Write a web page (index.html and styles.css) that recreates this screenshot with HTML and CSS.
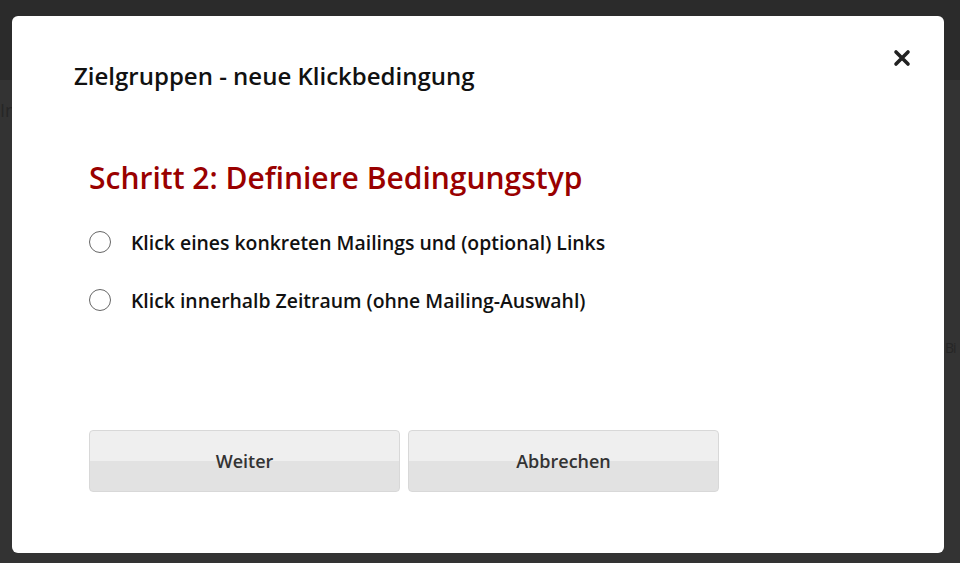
FILE: index.html
```html
<!DOCTYPE html>
<html lang="de">
<head>
<meta charset="utf-8">
<link rel="stylesheet" href="styles.css">
</head>
<body>
<div class="backdrop">
  <div class="bg-band top"></div>
  <div class="bg-text left">Inhn</div>
  <div class="bg-text right">Bi</div>
  <div class="modal">
    <div class="modal-head">
      <h1 class="title">Zielgruppen - neue Klickbedingung</h1>
      <button class="close" aria-label="Schließen">
        <svg width="18" height="18" viewBox="0 0 18 18"><path d="M3 3 L15 15 M15 3 L3 15" stroke="#222" stroke-width="3.6" stroke-linecap="round"/></svg>
      </button>
    </div>
    <div class="modal-body">
      <h2 class="step">Schritt 2: Definiere Bedingungstyp</h2>
      <label class="option"><span class="radio"></span><span>Klick eines konkreten Mailings und (optional) Links</span></label>
      <label class="option"><span class="radio"></span><span>Klick innerhalb Zeitraum (ohne Mailing-Auswahl)</span></label>
      <div class="actions">
        <button class="btn">Weiter</button>
        <button class="btn">Abbrechen</button>
      </div>
    </div>
  </div>
</div>
</body>
</html>
```

FILE: styles.css
```css
* { box-sizing: border-box; }
html, body { margin: 0; padding: 0; }
body {
  width: 960px;
  height: 563px;
  overflow: hidden;
  background: #333333;
  font-family: "Open Sans", "Noto Sans", sans-serif;
}
.backdrop {
  position: relative;
  width: 960px;
  height: 563px;
  padding: 16px 16px 10px 12px;
}
.bg-band.top {
  position: absolute;
  left: 0; top: 0; right: 0;
  height: 80px;
  background: #2b2b2b;
}
.bg-text {
  position: absolute;
  color: #262626;
  font-size: 18px;
}
.bg-text.left { left: 0; top: 98px; }
.bg-text.right { left: 945px; top: 338px; font-size: 14px; letter-spacing: -1px; }
.modal {
  position: relative;
  width: 932px;
  height: 537px;
  background: #fff;
  border-radius: 6px;
  padding: 0 0 0 62px;
}
.modal-head {
  display: flex;
  justify-content: space-between;
  align-items: flex-start;
  padding-top: 44px;
  padding-right: 32px;
}
.title {
  margin: 0;
  font-size: 24px;
  font-weight: 600;
  color: #111;
  line-height: 32px;
}
.close {
  border: 0;
  background: none;
  padding: 0;
  margin-top: -12px;
  width: 20px; height: 20px;
  display: flex; align-items: center; justify-content: center;
}
.modal-body {
  padding-left: 15px;
  padding-top: 66px;
}
.step {
  margin: 0 0 28px;
  font-size: 30px;
  font-weight: 600;
  color: #990000;
  line-height: 40px;
}
.option {
  display: flex;
  align-items: center;
  gap: 20px;
  height: 32px;
  margin-bottom: 26px;
  font-size: 19.4px;
  font-weight: 600;
  color: #111;
}
.radio {
  width: 22px; height: 22px;
  border: 1.5px solid #666;
  border-radius: 50%;
  flex: none;
}
.actions {
  display: flex;
  gap: 8px;
  margin-top: 114px;
}
.btn {
  width: 311px;
  height: 62px;
  border: 1px solid #d8d8d8;
  border-radius: 4px;
  background: linear-gradient(#efefef 0, #efefef 50%, #e2e2e2 50%, #e2e2e2 100%);
  font-family: inherit;
  font-size: 18px;
  font-weight: 600;
  color: #333;
}
```
